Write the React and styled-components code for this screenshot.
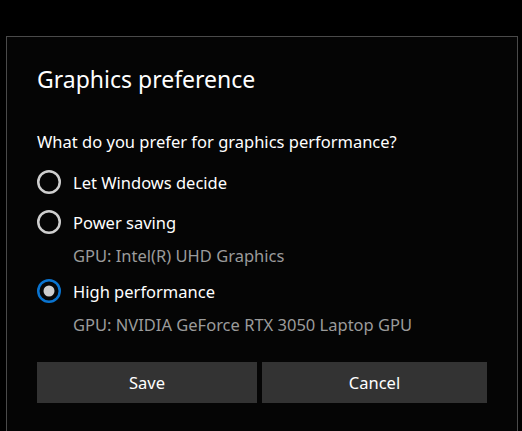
import React, { useState } from 'react'
import styled, { createGlobalStyle } from 'styled-components'

const Global = createGlobalStyle`
  html, body {
    margin: 0;
    background: #000;
    height: 100%;
  }
  body {
    font-family: 'Noto Sans', 'Open Sans', sans-serif;
    color: #fff;
    overflow: hidden;
  }
`

const Screen = styled.div`
  height: 431px;
  padding: 36px 4px 0 6px;
  box-sizing: border-box;
`

const Dialog = styled.div`
  height: 100%;
  box-sizing: border-box;
  border: 1px solid #4a4a4a;
  border-bottom: none;
  background: #050505;
  padding: 26px 30px 0 30px;
`

const Title = styled.h1`
  margin: 0;
  font-size: 23px;
  line-height: 32px;
  font-weight: 400;
`

const Question = styled.p`
  margin: 37px 0 0;
  font-size: 16.5px;
  line-height: 20px;
`

const Options = styled.div`
  display: flex;
  flex-direction: column;
  margin-top: 18px;
`

const Row = styled.label`
  display: flex;
  align-items: center;
  gap: 12px;
  height: 24px;
  margin-top: ${p => p.$gap}px;
  font-size: 16.5px;
  cursor: pointer;
`

const Sub = styled.div`
  margin-top: ${p => p.$gap}px;
  padding-left: 36px;
  font-size: 16.5px;
  line-height: 20px;
  color: #9b9b9b;
`

const Buttons = styled.div`
  display: grid;
  grid-template-columns: 220px 225px;
  gap: 5px;
  margin-top: 27px;
`

const Button = styled.button`
  height: 41px;
  border: none;
  background: #333;
  color: #fff;
  font-family: inherit;
  font-size: 16.5px;
  cursor: pointer;
`

const Radio = ({ checked }) => (
  <svg width="24" height="24" viewBox="0 0 24 24">
    <circle
      cx="12"
      cy="12"
      r="10.75"
      fill="none"
      stroke={checked ? '#0a74d0' : '#cfcfcf'}
      strokeWidth="2.5"
    />
    {checked && <circle cx="12" cy="12" r="5.5" fill="#cdcdcd" />}
  </svg>
)

const options = [
  { id: 'auto', label: 'Let Windows decide', gap: 0 },
  { id: 'save', label: 'Power saving', gpu: 'GPU: Intel(R) UHD Graphics', gap: 16, subGap: 12 },
  { id: 'high', label: 'High performance', gpu: 'GPU: NVIDIA GeForce RTX 3050 Laptop GPU', gap: 13, subGap: 12 },
]

export default function App() {
  const [choice, setChoice] = useState('high')
  return (
    <Screen>
      <Global />
      <Dialog>
        <Title>Graphics preference</Title>
        <Question>What do you prefer for graphics performance?</Question>
        <Options>
          {options.map(o => (
            <React.Fragment key={o.id}>
              <Row $gap={o.gap} onClick={() => setChoice(o.id)}>
                <Radio checked={choice === o.id} />
                {o.label}
              </Row>
              {o.gpu && <Sub $gap={o.subGap}>{o.gpu}</Sub>}
            </React.Fragment>
          ))}
        </Options>
        <Buttons>
          <Button>Save</Button>
          <Button>Cancel</Button>
        </Buttons>
      </Dialog>
    </Screen>
  )
}
